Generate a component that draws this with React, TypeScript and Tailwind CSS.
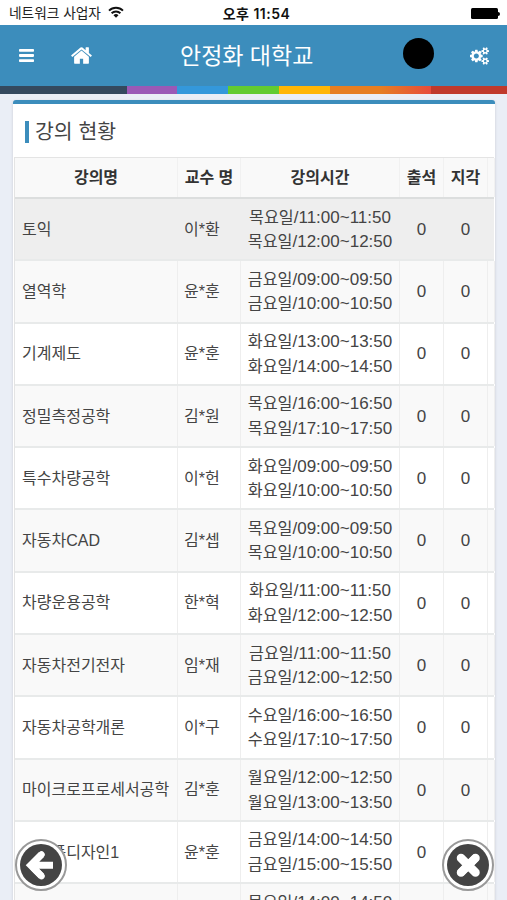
import React from 'react';
import { clsx } from 'clsx';

const courses = [
  { name: '토익', professor: '이*환', times: [['목요일', '11:00~11:50'], ['목요일', '12:00~12:50']] },
  { name: '열역학', professor: '윤*훈', times: [['금요일', '09:00~09:50'], ['금요일', '10:00~10:50']] },
  { name: '기계제도', professor: '윤*훈', times: [['화요일', '13:00~13:50'], ['화요일', '14:00~14:50']] },
  { name: '정밀측정공학', professor: '김*원', times: [['목요일', '16:00~16:50'], ['목요일', '17:10~17:50']] },
  { name: '특수차량공학', professor: '이*헌', times: [['화요일', '09:00~09:50'], ['화요일', '10:00~10:50']] },
  { name: '자동차CAD', professor: '김*셉', times: [['목요일', '09:00~09:50'], ['목요일', '10:00~10:50']] },
  { name: '차량운용공학', professor: '한*혁', times: [['화요일', '11:00~11:50'], ['화요일', '12:00~12:50']] },
  { name: '자동차전기전자', professor: '임*재', times: [['금요일', '11:00~11:50'], ['금요일', '12:00~12:50']] },
  { name: '자동차공학개론', professor: '이*구', times: [['수요일', '16:00~16:50'], ['수요일', '17:10~17:50']] },
  { name: '마이크로프로세서공학', professor: '김*훈', times: [['월요일', '12:00~12:50'], ['월요일', '13:00~13:50']] },
  { name: '신제품디자인1', professor: '윤*훈', times: [['금요일', '14:00~14:50'], ['금요일', '15:00~15:50']] },
  { name: '', professor: '', times: [['목요일', '14:00~14:50']] },
];

const columns = 'grid grid-cols-[163px_63px_159px_44px_44px_7px]';

function HomeIcon() {
  return (
    <svg viewBox="0 0 1792 1792" className="w-[23px] h-[23px]" fill="currentColor">
      <path d="M1472 992v480q0 26-19 45t-45 19h-384v-384h-256v384h-384q-26 0-45-19t-19-45v-480q0-1 .5-3t.5-3l575-474 575 474q1 2 1 6zm223-69l-62 74q-8 9-21 11h-3q-13 0-21-7l-692-577-692 577q-12 8-24 7-13-2-21-11l-62-74q-8-10-7-23.5t11-21.5l719-599q32-26 76-26t76 26l244 204v-195q0-14 9-23t23-9h192q14 0 23 9t9 23v408l219 182q10 8 11 21.5t-7 23.5z" />
    </svg>
  );
}

function BarsIcon() {
  return (
    <svg viewBox="0 0 15 13" className="w-[15px] h-[13px]" fill="currentColor">
      <rect width="15" height="2.8" rx="0.8" />
      <rect y="5.1" width="15" height="2.8" rx="0.8" />
      <rect y="10.2" width="15" height="2.8" rx="0.8" />
    </svg>
  );
}

function CogsIcon() {
  return (
    <svg viewBox="0 0 1920 1792" className="w-[19px] h-[18px]" fill="currentColor">
      <path d="M896 896q0-106-75-181t-181-75-181 75-75 181 75 181 181 75 181-75 75-181zm768 512q0-52-38-90t-90-38-90 38-38 90q0 53 37.5 90.5t90.5 37.5 90.5-37.5 37.5-90.5zm0-1024q0-52-38-90t-90-38-90 38-38 90q0 53 37.5 90.5t90.5 37.5 90.5-37.5 37.5-90.5zm-384 421v185q0 10-7 19.5t-16 10.5l-155 24q-11 35-32 76 34 48 90 115 7 11 7 20 0 12-7 19-23 30-82.5 89.5t-78.5 59.5q-11 0-21-7l-115-90q-37 19-77 31-11 108-23 155-7 24-30 24h-186q-11 0-20-7.5t-10-17.5l-23-153q-34-10-75-31l-118 89q-7 7-20 7-11 0-21-8-144-133-144-160 0-9 7-19 10-14 41-53t47-61q-23-44-35-82l-152-24q-10-1-17-9.5t-7-19.5v-185q0-10 7-19.5t16-10.5l155-24q11-35 32-76-34-48-90-115-7-11-7-20 0-12 7-20 22-30 82-89t79-59q11 0 21 7l115 90q34-18 77-32 11-108 23-154 7-24 30-24h186q11 0 20 7.5t10 17.5l23 153q34 10 75 31l118-89q8-7 20-7 11 0 21 8 144 133 144 160 0 9-7 19-12 16-42 54t-45 60q23 48 34 82l152 23q10 2 17 10.5t7 19.5zm640 533v140q0 16-149 31-12 27-30 52 51 113 51 138 0 4-4 7-122 71-124 71-8 0-46-47t-52-68q-20 2-30 2t-30-2q-14 21-52 68t-46 47q-2 0-124-71-4-3-4-7 0-25 51-138-18-25-30-52-149-15-149-31v-140q0-16 149-31 13-29 30-52-51-113-51-138 0-4 4-7 4-2 35-20t59-34 30-16q8 0 46 46.5t52 67.5q20-2 30-2t30 2q51-71 92-112l6-2q4 0 124 70 4 3 4 7 0 25-51 138 17 23 30 52 149 15 149 31zm0-1024v140q0 16-149 31-12 27-30 52 51 113 51 138 0 4-4 7-122 71-124 71-8 0-46-47t-52-68q-20 2-30 2t-30-2q-14 21-52 68t-46 47q-2 0-124-71-4-3-4-7 0-25 51-138-18-25-30-52-149-15-149-31v-140q0-16 149-31 13-29 30-52-51-113-51-138 0-4 4-7 4-2 35-20t59-34 30-16q8 0 46 46.5t52 67.5q20-2 30-2t30 2q51-71 92-112l6-2q4 0 124 70 4 3 4 7 0 25-51 138 17 23 30 52 149 15 149 31z" />
    </svg>
  );
}

function StatusBar() {
  return (
    <div className="h-[25px] shrink-0 bg-white grid grid-cols-3 items-center pl-[9px] pr-[7px] text-[#222]">
      <div className="flex items-center gap-[7px] text-[13.7px] whitespace-nowrap leading-none">
        <span className="pt-[2px]">네트워크 사업자</span>
        <svg viewBox="0 0 16 12" className="w-[16px] h-[12px]" fill="none" stroke="#111" strokeWidth="1.9">
          <path d="M1 4.6a10 10 0 0 1 14 0" />
          <path d="M3.6 7.3a6.3 6.3 0 0 1 8.8 0" />
          <path d="M8 11.8 5.5 9.2a3.5 3.5 0 0 1 5 0z" fill="#111" stroke="none" />
        </svg>
      </div>
      <div className="text-center text-[14px] tracking-[0.5px] leading-none font-semibold text-[#111] font-['Inter','Noto_Sans_CJK_KR',sans-serif] whitespace-nowrap pl-[4px] pt-[2px]">
        오후 11:54
      </div>
      <div className="flex items-center justify-end gap-[0.5px] pt-[2px]">
        <span className="w-[27px] h-[11px] bg-black rounded-[1.5px]" />
        <span className="w-[2px] h-[4px] bg-black rounded-r-full" />
      </div>
    </div>
  );
}

function Header() {
  return (
    <header className="h-[61px] shrink-0 bg-[#3c8dbc] text-white grid grid-cols-[71px_110px_133px_1fr_auto] items-center pr-[18px]">
      <button className="pl-[19px]"><BarsIcon /></button>
      <button className="-ml-[1px]"><HomeIcon /></button>
      <h1 className="text-[23px] leading-none whitespace-nowrap -ml-px pt-px">안정화 대학교</h1>
      <span className="ml-[89px] -mt-[5px] w-[31px] h-[31px] rounded-full bg-black" />
      <button><CogsIcon /></button>
    </header>
  );
}

export default function App() {
  return (
    <div className="relative w-[507px] h-[900px] overflow-hidden flex flex-col bg-[#eaeef6] font-['Liberation_Sans','Noto_Sans_CJK_KR',sans-serif] text-[#444]">
      <StatusBar />
      <Header />
      <div className="h-[8px] shrink-0 bg-[linear-gradient(to_right,#34495e_25%,#9b59b6_25%,#9b59b6_35%,#3498db_35%,#3498db_45%,#62cb31_45%,#62cb31_55%,#ffb606_55%,#ffb606_65%,#e67e22_65%,#e67e22_75%,#e74c3c_85%,#c0392b_85%)]" />

      <main className="mt-[6px] ml-[13px] w-[482px] shrink-0 bg-white border-t-4 border-[#3c8dbc] rounded-t-[3px] shadow-[0_1px_3px_rgba(0,0,0,0.15)]">
        <div className="h-[53px] flex items-center pl-[12px]">
          <span className="w-[4px] h-[22px] mt-[2px] bg-[#3c8dbc]" />
          <h2 className="ml-[6px] mt-[4px] text-[20.5px] leading-none">강의 현황</h2>
        </div>

        <div className="mx-px border-l border-[#e4e4e4]">
          <div className={clsx(columns, 'h-[42px] bg-[#f9f9f9] border-t border-t-[#e4e4e4] border-b-2 border-b-[#dcdede] text-[16px] font-bold text-[#333] *:flex *:items-center *:justify-center *:border-r *:border-[#f1f1f1] whitespace-nowrap')}>
            <div>강의명</div>
            <div>교수 명</div>
            <div>강의시간</div>
            <div>출석</div>
            <div>지각</div>
            <div />
          </div>

          {courses.map((course, i) => (
            <div
              key={i}
              className={clsx(
                columns,
                'h-[62.3px] border-b-2 border-[#e8eaea] text-[16px] *:flex *:items-center *:pt-px *:border-r whitespace-nowrap',
                i === 0 ? 'bg-[#eeeeee] *:border-transparent' : '*:border-[#eeeeee]',
                i > 0 && (i % 2 ? 'bg-[#f9f9f9]' : 'bg-white'),
              )}
            >
              <div className="pl-[7px]">{course.name}</div>
              <div className="pl-[6px]">{course.professor}</div>
              <div className="flex-col">
                {course.times.map(([day, time]) => (
                  <p key={time} className="relative top-[4.5px] h-[24.5px] leading-[24.5px] text-[17px]">
                    <span className="text-[16.2px]">{day}</span>/{time}
                  </p>
                ))}
              </div>
              <div className="justify-center text-[17px]">{course.name && '0'}</div>
              <div className="justify-center text-[17px]">{course.name && '0'}</div>
              <div />
            </div>
          ))}
        </div>
      </main>

      {/* floating navigation buttons */}
      <button className="absolute left-[14px] top-[838px]">
        <svg viewBox="0 0 54 54" className="w-[54px] h-[54px]">
          <circle cx="27" cy="27" r="25" fill="#fff" stroke="#999" strokeWidth="2" />
          <circle cx="27" cy="27" r="21" fill="#444" />
          <path d="M27.5 16.5 16.7 27.3l10.8 10.8M18 27.3h21" fill="none" stroke="#fff" strokeWidth="7" strokeLinecap="butt" />
          <path d="M27.5 16.5l-8 8M27.5 38.1l-8-8" fill="none" stroke="#fff" strokeWidth="6.5" strokeLinecap="round" />
        </svg>
      </button>
      <button className="absolute left-[441px] top-[838px]">
        <svg viewBox="0 0 54 54" className="w-[54px] h-[54px]">
          <circle cx="27" cy="27" r="25" fill="#fff" stroke="#999" strokeWidth="2" />
          <circle cx="27" cy="27" r="21" fill="#444" />
          <path d="m19 19 16.5 16.5M35.5 19 19 35.5" fill="none" stroke="#fff" strokeWidth="8" />
          <path d="m20 20 14.5 14.5M34.5 20 20 34.5" fill="none" stroke="#fff" strokeWidth="8.5" strokeLinecap="round" />
        </svg>
      </button>
    </div>
  );
}
